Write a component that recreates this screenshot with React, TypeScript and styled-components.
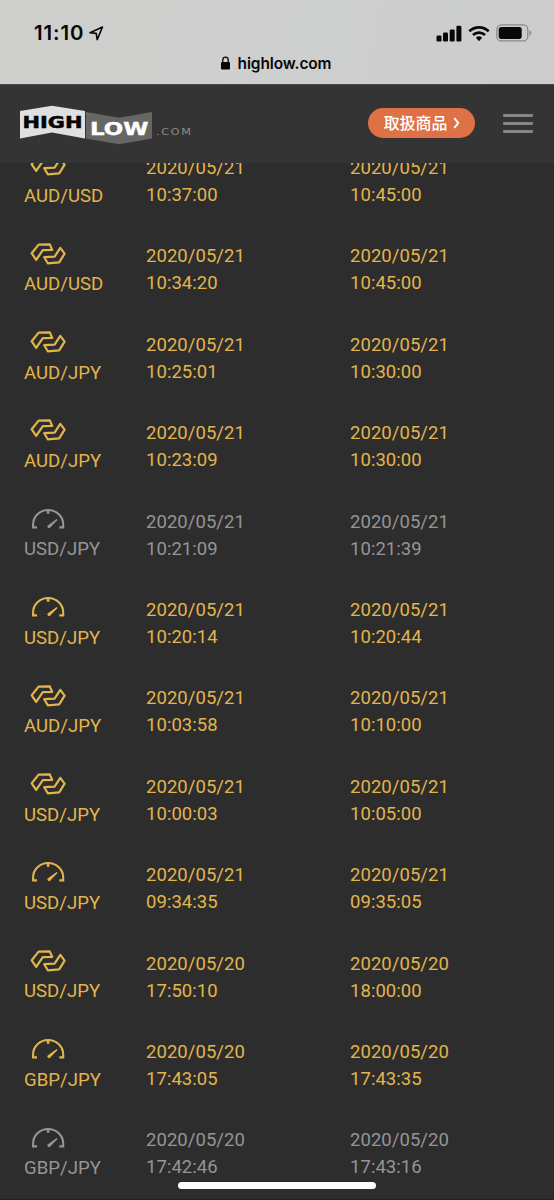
import React from "react";
import styled, { createGlobalStyle } from "styled-components";

const GlobalStyle = createGlobalStyle`
  html, body { margin: 0; padding: 0; background: #2d2d2d; }
  * { box-sizing: border-box; }
`;

const Screen = styled.div`
  position: relative;
  display: flex;
  flex-direction: column;
  width: 554px;
  height: 1200px;
  overflow: hidden;
  background: #2d2d2d;
  border-bottom: 1px solid #241f22;
  font-family: Roboto, "Noto Sans CJK JP", sans-serif;
`;

const BrowserChrome = styled.header`
  display: flex;
  flex-direction: column;
  flex: none;
  height: 84px;
  background: linear-gradient(100deg, #cfcecb 0%, #cecfcf 45%, #cccccc 100%);
  color: #080808;
  font-family: Inter, sans-serif;
`;

const StatusBar = styled.div`
  display: flex;
  justify-content: space-between;
  align-items: center;
  height: 46px;
  padding: 20px 22px 0 34px;
`;

const Clock = styled.div`
  display: flex;
  align-items: center;
  gap: 5px;
  font-size: 20.4px;
  font-weight: 600;
  line-height: 26px;
  letter-spacing: 0.9px;
`;

const StatusIcons = styled.div`
  display: flex;
  align-items: center;
  gap: 6px;
`;

const AddressBar = styled.div`
  display: flex;
  justify-content: center;
  align-items: center;
  gap: 8px;
  height: 34px;
  padding-right: 2px;
  font-size: 15.5px;
  font-weight: 600;
  letter-spacing: -0.12px;
`;

const SiteHeader = styled.nav`
  display: flex;
  align-items: center;
  flex: none;
  height: 79px;
  padding: 0 21px 0 20px;
  background: #343434;
  border-top: 1px solid #484848;
`;

const ProductsButton = styled.button`
  display: flex;
  align-items: center;
  justify-content: center;
  gap: 6px;
  width: 107px;
  height: 30px;
  margin: -3px 28px 0 auto;
  padding: 0 0 0 1px;
  border: 0;
  border-radius: 15px;
  background: #df7146;
  color: #fff;
  font: 500 15.9px/29px "Noto Sans CJK JP", sans-serif;
`;

const MenuButton = styled.div`
  display: flex;
  flex-direction: column;
  justify-content: space-between;
  width: 30px;
  height: 19px;
  margin-top: -1px;
`;

const MenuLine = styled.span`
  height: 3px;
  border-radius: 1px;
  background: #858585;
`;

const HistoryViewport = styled.main`
  flex: 1;
  min-height: 0;
  overflow: hidden;
`;

const HistoryList = styled.div`
  margin-top: -8.8px;
`;

const TradeRow = styled.div<{ $muted: boolean }>`
  display: grid;
  grid-template-columns: 122px 204px 1fr;
  height: 88.4px;
  padding-left: 24px;
  color: ${(p) => (p.$muted ? "#959595" : "#e2b54c")};
  font-size: 18.5px;
  line-height: 27px;
`;

const PairCell = styled.div`
  display: flex;
  flex-direction: column;
`;

const IconSlot = styled.div`
  height: 28.7px;
  padding-left: 6px;
  svg { display: block; }
`;

const PairName = styled.span`
  font-size: 18.6px;
`;

const TimeCell = styled.div`
  display: flex;
  flex-direction: column;
  padding-top: 0.9px;
`;

const DateText = styled.span`
  letter-spacing: 0.05px;
`;

const TimeText = styled.span`
  letter-spacing: 0.05px;
`;

const HomeIndicator = styled.div`
  position: absolute;
  left: 178px;
  bottom: 10px;
  width: 198px;
  height: 7px;
  border-radius: 4px;
  background: #fff;
`;

const LogoSvg = styled.svg`
  display: block;
  margin-top: 3px;
`;

const SwapIcon = () => (
  <svg width="36" height="25" viewBox="0 0 36 25" fill="none" stroke="currentColor" strokeWidth="2.2" strokeLinejoin="round">
    <path d="M6.2 16.8 L1.7 10.3 L8.6 1.6 L19.8 1.4 L22.2 7 L12.8 7.2 Z" />
    <path d="M30.3 4.8 L34.6 10.6 L29.2 19.4 L17.8 20.3 L14.2 14.2 L24.6 13.7 Z" />
  </svg>
);

const GaugeIcon = () => (
  <svg width="36" height="25" viewBox="0 0 36 25" fill="none" stroke="currentColor" strokeWidth="2.1">
    <path d="M7 19.4 H3.1 V16.4 A15 14.4 0 0 1 33.2 16.4 V19.4 H29.3" />
    <path d="M18.1 2 V5.8" strokeWidth="2.6" />
    <path d="M26.7 11 L27.6 12 L20.5 19.3 A1.7 1.7 0 0 1 17.6 17.5 Z" fill="currentColor" stroke="none" />
  </svg>
);

const Logo = () => (
  <LogoSvg width="174" height="42" viewBox="0 0 174 42">
    <path d="M0 6 L32 0.7 L65 6 V33.5 L32 27.5 L0 33.5 Z" fill="#dfe1e0" />
    <path d="M66 7 L99 12.8 L132 7 V33.5 L99 39.3 L66 33.5 Z" fill="#666765" />
    <text x="2.5" y="23.1" fill="#050505" stroke="#050505" strokeWidth="0.5" fontFamily="'DejaVu Sans', sans-serif" fontSize="16.2" fontWeight="700" textLength="60" lengthAdjust="spacingAndGlyphs">HIGH</text>
    <text x="70" y="29.5" fill="#fff" stroke="#fff" strokeWidth="0.4" fontFamily="'DejaVu Sans', sans-serif" fontSize="16.8" fontWeight="700" textLength="58.5" lengthAdjust="spacingAndGlyphs">LOW</text>
    <text x="136" y="29.5" fill="#8b8b8b" fontFamily="'DejaVu Sans', sans-serif" fontSize="8" textLength="36.5" lengthAdjust="spacingAndGlyphs" letterSpacing="1.2">.COM</text>
  </LogoSvg>
);

type Trade = {
  kind: "swap" | "gauge";
  pair: string;
  date: string;
  opened: string;
  closed: string;
  muted?: boolean;
};

const trades: Trade[] = [
  { kind: "swap", pair: "AUD/USD", date: "2020/05/21", opened: "10:37:00", closed: "10:45:00" },
  { kind: "swap", pair: "AUD/USD", date: "2020/05/21", opened: "10:34:20", closed: "10:45:00" },
  { kind: "swap", pair: "AUD/JPY", date: "2020/05/21", opened: "10:25:01", closed: "10:30:00" },
  { kind: "swap", pair: "AUD/JPY", date: "2020/05/21", opened: "10:23:09", closed: "10:30:00" },
  { kind: "gauge", pair: "USD/JPY", date: "2020/05/21", opened: "10:21:09", closed: "10:21:39", muted: true },
  { kind: "gauge", pair: "USD/JPY", date: "2020/05/21", opened: "10:20:14", closed: "10:20:44" },
  { kind: "swap", pair: "AUD/JPY", date: "2020/05/21", opened: "10:03:58", closed: "10:10:00" },
  { kind: "swap", pair: "USD/JPY", date: "2020/05/21", opened: "10:00:03", closed: "10:05:00" },
  { kind: "gauge", pair: "USD/JPY", date: "2020/05/21", opened: "09:34:35", closed: "09:35:05" },
  { kind: "swap", pair: "USD/JPY", date: "2020/05/20", opened: "17:50:10", closed: "18:00:00" },
  { kind: "gauge", pair: "GBP/JPY", date: "2020/05/20", opened: "17:43:05", closed: "17:43:35" },
  { kind: "gauge", pair: "GBP/JPY", date: "2020/05/20", opened: "17:42:46", closed: "17:43:16", muted: true },
];

export default function App() {
  return (
    <Screen>
      <GlobalStyle />
      <BrowserChrome>
        <StatusBar>
          <Clock>
            11:10
            <svg width="15" height="15" viewBox="0 0 15 15" fill="none" stroke="#080808" strokeWidth="1.6" strokeLinejoin="round">
              <path d="M1 6.8 L13.5 1 L8.2 13.6 L7.2 7.4 Z" />
            </svg>
          </Clock>
          <StatusIcons>
            <svg width="26" height="17" viewBox="0 0 26 17" fill="#080808">
              <rect x="0.5" y="10.5" width="5" height="6" rx="1.2" />
              <rect x="7" y="7.5" width="5" height="9" rx="1.2" />
              <rect x="13.7" y="4.5" width="5" height="12" rx="1.2" />
              <rect x="20.4" y="0.8" width="5" height="15.7" rx="1.2" />
            </svg>
            <svg width="22" height="17" viewBox="0 0 22 17" fill="none" stroke="#080808" strokeWidth="2.7">
              <path d="M1.3 6.2 A14 14 0 0 1 20.7 6.2" />
              <path d="M5 10 A8.8 8.8 0 0 1 17 10" />
              <path d="M7.9 12.7 A4.6 4.6 0 0 1 14.1 12.7 L11 16.2 Z" fill="#080808" stroke="none" />
            </svg>
            <svg width="36" height="18" viewBox="0 0 36 18">
              <rect x="0.8" y="0.9" width="31" height="16" rx="4.5" fill="none" stroke="#8b8b8b" strokeWidth="1.3" />
              <rect x="2.7" y="2.9" width="23" height="12" rx="2.6" fill="#080808" />
              <path d="M33.5 6.3 Q35.5 7 35.5 9 Q35.5 11 33.5 11.7 Z" fill="#8b8b8b" />
            </svg>
          </StatusIcons>
        </StatusBar>
        <AddressBar>
          <svg width="9" height="14" viewBox="0 0 9 14">
            <rect x="0" y="6" width="9" height="7.5" rx="1.3" fill="#080808" />
            <path d="M1.8 6.5 V4 A2.7 2.8 0 0 1 7.2 4 V6.5" fill="none" stroke="#080808" strokeWidth="1.3" />
          </svg>
          highlow.com
        </AddressBar>
      </BrowserChrome>
      <SiteHeader>
        <Logo />
        <ProductsButton>
          取扱商品
          <svg width="7" height="12" viewBox="0 0 7 12" fill="none" stroke="#fff" strokeWidth="2">
            <path d="M1.3 1 L5.2 6 L1.3 11" />
          </svg>
        </ProductsButton>
        <MenuButton>
          <MenuLine />
          <MenuLine />
          <MenuLine />
        </MenuButton>
      </SiteHeader>
      <HistoryViewport>
        <HistoryList>
          {trades.map((t) => (
            <TradeRow key={t.opened} $muted={!!t.muted}>
              <PairCell>
                <IconSlot>{t.kind === "swap" ? <SwapIcon /> : <GaugeIcon />}</IconSlot>
                <PairName>{t.pair}</PairName>
              </PairCell>
              <TimeCell>
                <DateText>{t.date}</DateText>
                <TimeText>{t.opened}</TimeText>
              </TimeCell>
              <TimeCell>
                <DateText>{t.date}</DateText>
                <TimeText>{t.closed}</TimeText>
              </TimeCell>
            </TradeRow>
          ))}
        </HistoryList>
      </HistoryViewport>
      <HomeIndicator />
    </Screen>
  );
}
